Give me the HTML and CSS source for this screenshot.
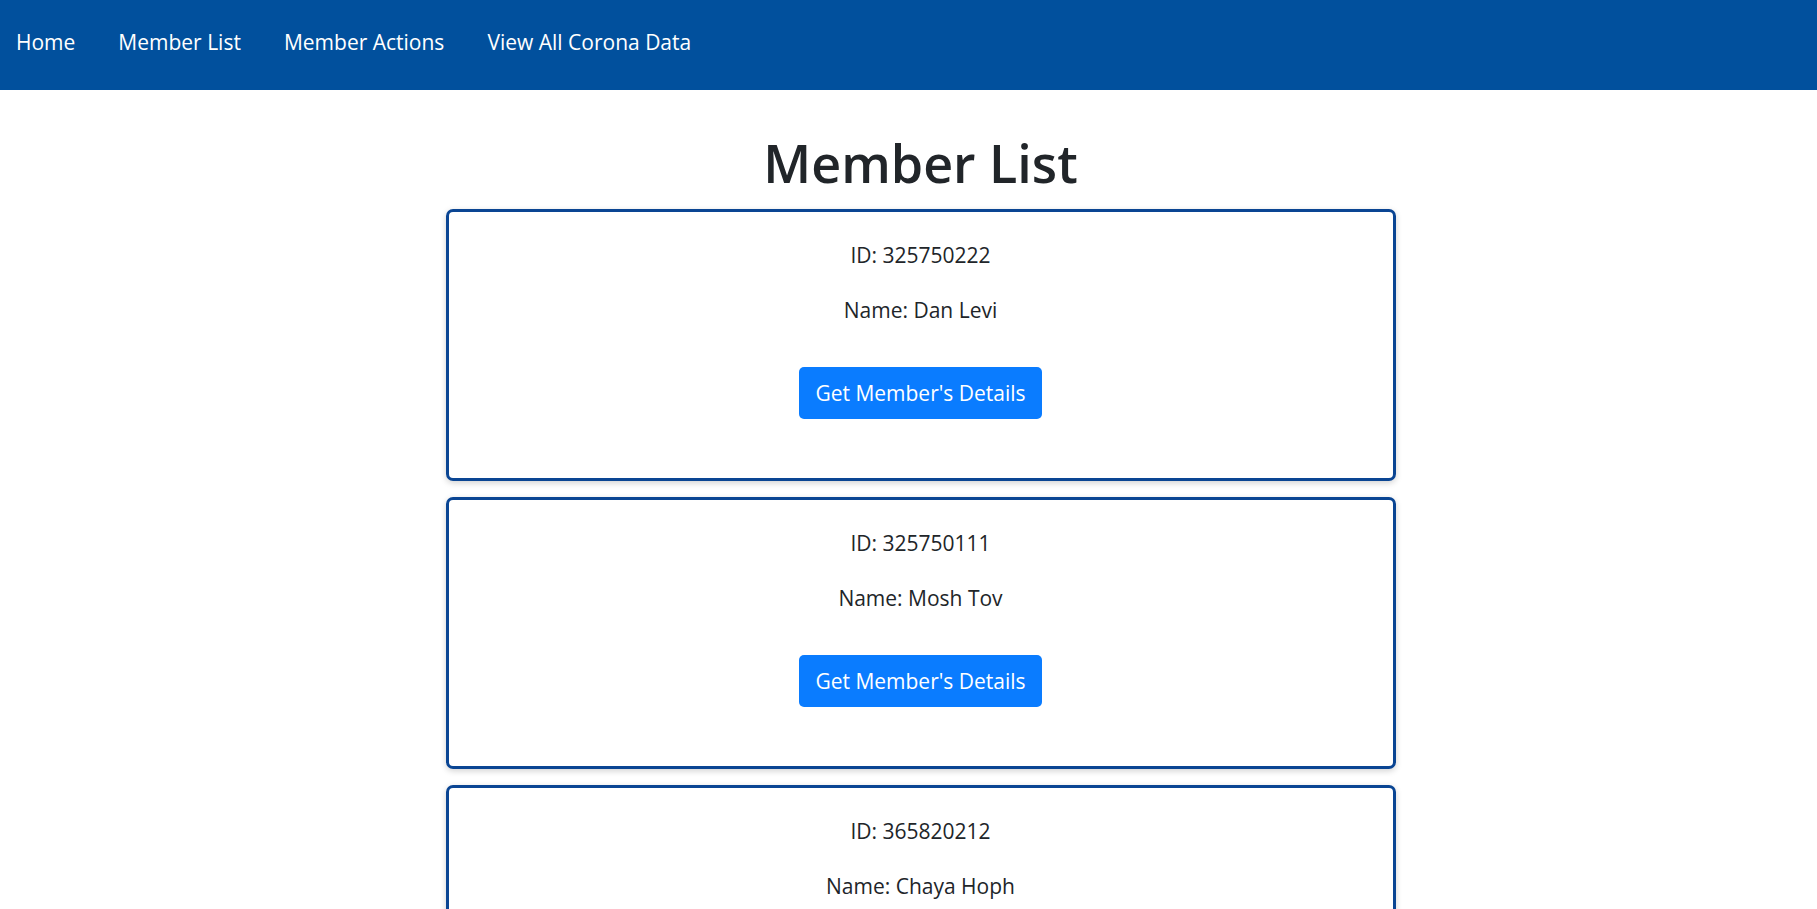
FILE: index.html
```html
<!DOCTYPE html>
<html lang="en">
<head>
<meta charset="utf-8">
<title>Member List</title>
<link rel="stylesheet" href="styles.css">
</head>
<body>
<nav class="topnav">
  <a class="navlink" href="#">Home</a>
  <a class="navlink" href="#">Member List</a>
  <a class="navlink" href="#">Member Actions</a>
  <a class="navlink" href="#">View All Corona Data</a>
</nav>
<main class="page">
  <h1 class="title">Member List</h1>
  <div class="list">
    <div class="card">
      <p class="line">ID: 325750222</p>
      <p class="line">Name: Dan Levi</p>
      <button class="btn">Get Member's Details</button>
    </div>
    <div class="card">
      <p class="line">ID: 325750111</p>
      <p class="line">Name: Mosh Tov</p>
      <button class="btn">Get Member's Details</button>
    </div>
    <div class="card">
      <p class="line">ID: 365820212</p>
      <p class="line">Name: Chaya Hoph</p>
      <button class="btn">Get Member's Details</button>
    </div>
  </div>
</main>
</body>
</html>
```
FILE: styles.css
```css
* { box-sizing: border-box; }
html, body { margin: 0; padding: 0; }
body {
  font-family: "Open Sans", "Noto Sans", "Liberation Sans", sans-serif;
  color: #212529;
  background: #fff;
  overflow: hidden;
}
.topnav {
  height: 90px;
  background: #01509d;
  display: flex;
  align-items: center;
  gap: 43px;
  padding: 0 0 6px 16px;
}
.navlink {
  color: #fff;
  text-decoration: none;
  font-size: 21px;
  line-height: 30px;
}
.page {
  padding-left: 24px;
}
.title {
  margin: 0;
  text-align: center;
  font-size: 52px;
  font-weight: 600;
  line-height: 64px;
  padding-top: 41px;
  height: 119px;
}
.list {
  display: flex;
  flex-direction: column;
  align-items: center;
  gap: 16px;
}
.card {
  width: 950px;
  height: 272px;
  flex-shrink: 0;
  border: 3px solid #0a4593;
  border-radius: 7px;
  box-shadow: 0 2px 6px rgba(0, 0, 0, 0.18);
  display: flex;
  flex-direction: column;
  align-items: center;
  padding-top: 28px;
}
.line {
  margin: 0 0 25px;
  font-size: 21px;
  line-height: 30px;
}
.line + .line { margin-bottom: 42px; }
.btn {
  width: 243px;
  height: 52px;
  border: none;
  border-radius: 5px;
  background: #0a7cff;
  color: #fff;
  font-family: inherit;
  font-size: 21px;
  padding: 0;
}
```
